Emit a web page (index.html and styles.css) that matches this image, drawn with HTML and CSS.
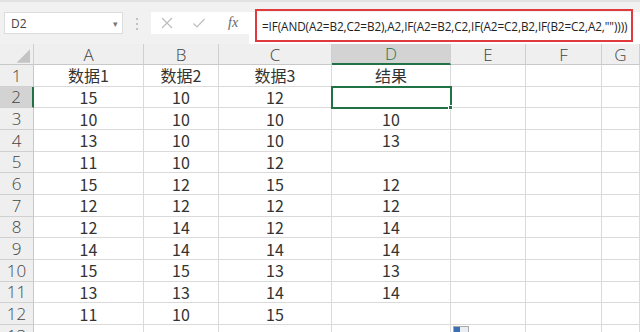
FILE: index.html
```html
<!DOCTYPE html>
<html lang="zh">
<head>
<meta charset="utf-8">
<link rel="stylesheet" href="styles.css">
</head>
<body>
<div class="app">
  <div class="toolbar">
    <div class="namebox"><span class="ref">D2</span><span class="caret">▾</span></div>
    <div class="grip">
      <svg width="4" height="14" viewBox="0 0 4 14"><circle cx="2" cy="2" r="1" fill="#b0b0b0"/><circle cx="2" cy="7" r="1" fill="#b0b0b0"/><circle cx="2" cy="12" r="1" fill="#b0b0b0"/></svg>
    </div>
    <div class="btns">
      <svg class="ic" width="14" height="14" viewBox="0 0 14 14"><path d="M2 2 L12 12 M12 2 L2 12" stroke="#bdbdbd" stroke-width="1.2" fill="none"/></svg>
      <svg class="ic" width="14" height="14" viewBox="0 0 14 14"><path d="M1.5 7.5 L5 11 L12.5 3" stroke="#bdbdbd" stroke-width="1.2" fill="none"/></svg>
      <span class="fx">fx</span>
    </div>
    <div class="formula">
      <div class="mark">=IF(AND(A2=B2,C2=B2),A2,IF(A2=B2,C2,IF(A2=C2,B2,IF(B2=C2,A2,""))))</div>
    </div>
  </div>
  <div class="sheet">
    <div class="c hd corner"><svg width="34" height="21" viewBox="0 0 34 21"><polygon points="17,19 31,5 31,19" fill="#c4c4c4"/></svg></div>
    <div class="c hd">A</div><div class="c hd">B</div><div class="c hd">C</div><div class="c hd sel">D</div><div class="c hd">E</div><div class="c hd">F</div><div class="c hd">G</div>

    <div class="c rh">1</div><div class="c">数据1</div><div class="c">数据2</div><div class="c">数据3</div><div class="c">结果</div><div class="c"></div><div class="c"></div><div class="c"></div>
    <div class="c rh sel">2</div><div class="c">15</div><div class="c">10</div><div class="c">12</div><div class="c active"><span class="handle"></span></div><div class="c"></div><div class="c"></div><div class="c"></div>
    <div class="c rh">3</div><div class="c">10</div><div class="c">10</div><div class="c">10</div><div class="c">10</div><div class="c"></div><div class="c"></div><div class="c"></div>
    <div class="c rh">4</div><div class="c">13</div><div class="c">10</div><div class="c">10</div><div class="c">13</div><div class="c"></div><div class="c"></div><div class="c"></div>
    <div class="c rh">5</div><div class="c">11</div><div class="c">10</div><div class="c">12</div><div class="c"></div><div class="c"></div><div class="c"></div><div class="c"></div>
    <div class="c rh">6</div><div class="c">15</div><div class="c">12</div><div class="c">15</div><div class="c">12</div><div class="c"></div><div class="c"></div><div class="c"></div>
    <div class="c rh">7</div><div class="c">12</div><div class="c">12</div><div class="c">12</div><div class="c">12</div><div class="c"></div><div class="c"></div><div class="c"></div>
    <div class="c rh">8</div><div class="c">12</div><div class="c">14</div><div class="c">12</div><div class="c">14</div><div class="c"></div><div class="c"></div><div class="c"></div>
    <div class="c rh">9</div><div class="c">14</div><div class="c">14</div><div class="c">14</div><div class="c">14</div><div class="c"></div><div class="c"></div><div class="c"></div>
    <div class="c rh">10</div><div class="c">15</div><div class="c">15</div><div class="c">13</div><div class="c">13</div><div class="c"></div><div class="c"></div><div class="c"></div>
    <div class="c rh">11</div><div class="c">13</div><div class="c">13</div><div class="c">14</div><div class="c">14</div><div class="c"></div><div class="c"></div><div class="c"></div>
    <div class="c rh">12</div><div class="c">11</div><div class="c">10</div><div class="c">15</div><div class="c"></div><div class="c"></div><div class="c"></div><div class="c"></div>
    <div class="c rh">13</div><div class="c"></div><div class="c"></div><div class="c"></div><div class="c"></div><div class="c"><span class="paste"></span></div><div class="c"></div><div class="c"></div>
  </div>
</div>
</body>
</html>
```

FILE: styles.css
```css
* { box-sizing: border-box; }
html, body { margin: 0; padding: 0; }
body {
  width: 640px;
  height: 332px;
  overflow: hidden;
  background: #fff;
  font-family: "Noto Sans CJK SC", "Noto Sans", sans-serif;
  color: #333;
}
.app { width: 640px; height: 332px; overflow: hidden; }

.toolbar {
  height: 44px;
  background: #f1f1f1;
  border-top: 2px solid #e2e2e2;
  display: flex;
  align-items: flex-start;
  position: relative;
}
.namebox {
  margin: 10px 0 0 4px;
  width: 119px;
  height: 22px;
  background: #fff;
  border: 1px solid #dcdcdc;
  display: flex;
  align-items: center;
  justify-content: space-between;
  padding: 0 4px 0 6px;
  font-family: "Open Sans", "Noto Sans", sans-serif;
  font-size: 12px;
  color: #444;
}
.caret { font-size: 9px; color: #777; }
.grip {
  width: 28px;
  display: flex;
  justify-content: center;
  padding-top: 15px;
}
.btns {
  margin-top: 10px;
  width: 98px;
  height: 22px;
  background: #fff;
  display: flex;
  align-items: center;
  padding-left: 9px;
  gap: 18px;
}
.fx {
  font-family: "Liberation Serif", "DejaVu Serif", serif;
  font-style: italic;
  font-size: 14px;
  color: #666;
  margin-left: 4px;
}
.formula {
  flex: 1;
  margin-top: 10px;
  height: 32px;
  background: #fff;
  position: relative;
}
.mark {
  position: absolute;
  left: 6px;
  top: -3px;
  width: 378px;
  height: 33px;
  border: 2px solid #e0393e;
  display: flex;
  align-items: center;
  padding-left: 5px;
  font-family: "Open Sans", "Noto Sans", sans-serif;
  font-size: 11.7px;
  color: #222;
  white-space: nowrap;
  letter-spacing: -0.08px;
}

.sheet {
  display: grid;
  grid-template-columns: 34px 110px 75px 113px 119px 75px 76px 38px;
  grid-template-rows: 21px repeat(12, 21.667px) 22px;
}
.c {
  border-right: 1px solid #dadada;
  border-bottom: 1px solid #dadada;
  display: flex;
  align-items: center;
  justify-content: center;
  font-size: 16px;
  line-height: 1;
  color: #333;
  position: relative;
  white-space: nowrap;
}
.hd {
  background: #efefef;
  border-right: 1px solid #d0d0d0;
  border-bottom: 1px solid #c8c8c8;
  color: #444;
  font-family: "Open Sans", "Noto Sans", sans-serif;
  font-weight: 300;
  font-size: 17px;
}
.corner { align-items: stretch; justify-content: stretch; }
.hd.sel {
  background: #d3d3d3;
  color: #217346;
  border-bottom: 2px solid #217346;
}
.rh {
  background: #efefef;
  border-right: 1px solid #c8c8c8;
  border-bottom: 1px solid #d0d0d0;
  color: #444;
  font-family: "Open Sans", "Noto Sans", sans-serif;
  font-weight: 300;
  font-size: 17px;
}
.rh.sel {
  background: #d3d3d3;
  border-right: 2px solid #217346;
}
.active {
  outline: 2px solid #217346;
  outline-offset: -1px;
  z-index: 2;
}
.handle {
  position: absolute;
  right: -3px;
  bottom: -3px;
  width: 5px;
  height: 5px;
  background: #217346;
  border: 1px solid #fff;
}
.paste {
  position: absolute;
  left: 2px;
  top: 1px;
  width: 16px;
  height: 10px;
  border: 1px solid #a9a9a9;
  background: linear-gradient(90deg, #3d6fb4 0 45%, #e9eef5 45%);
}
```
